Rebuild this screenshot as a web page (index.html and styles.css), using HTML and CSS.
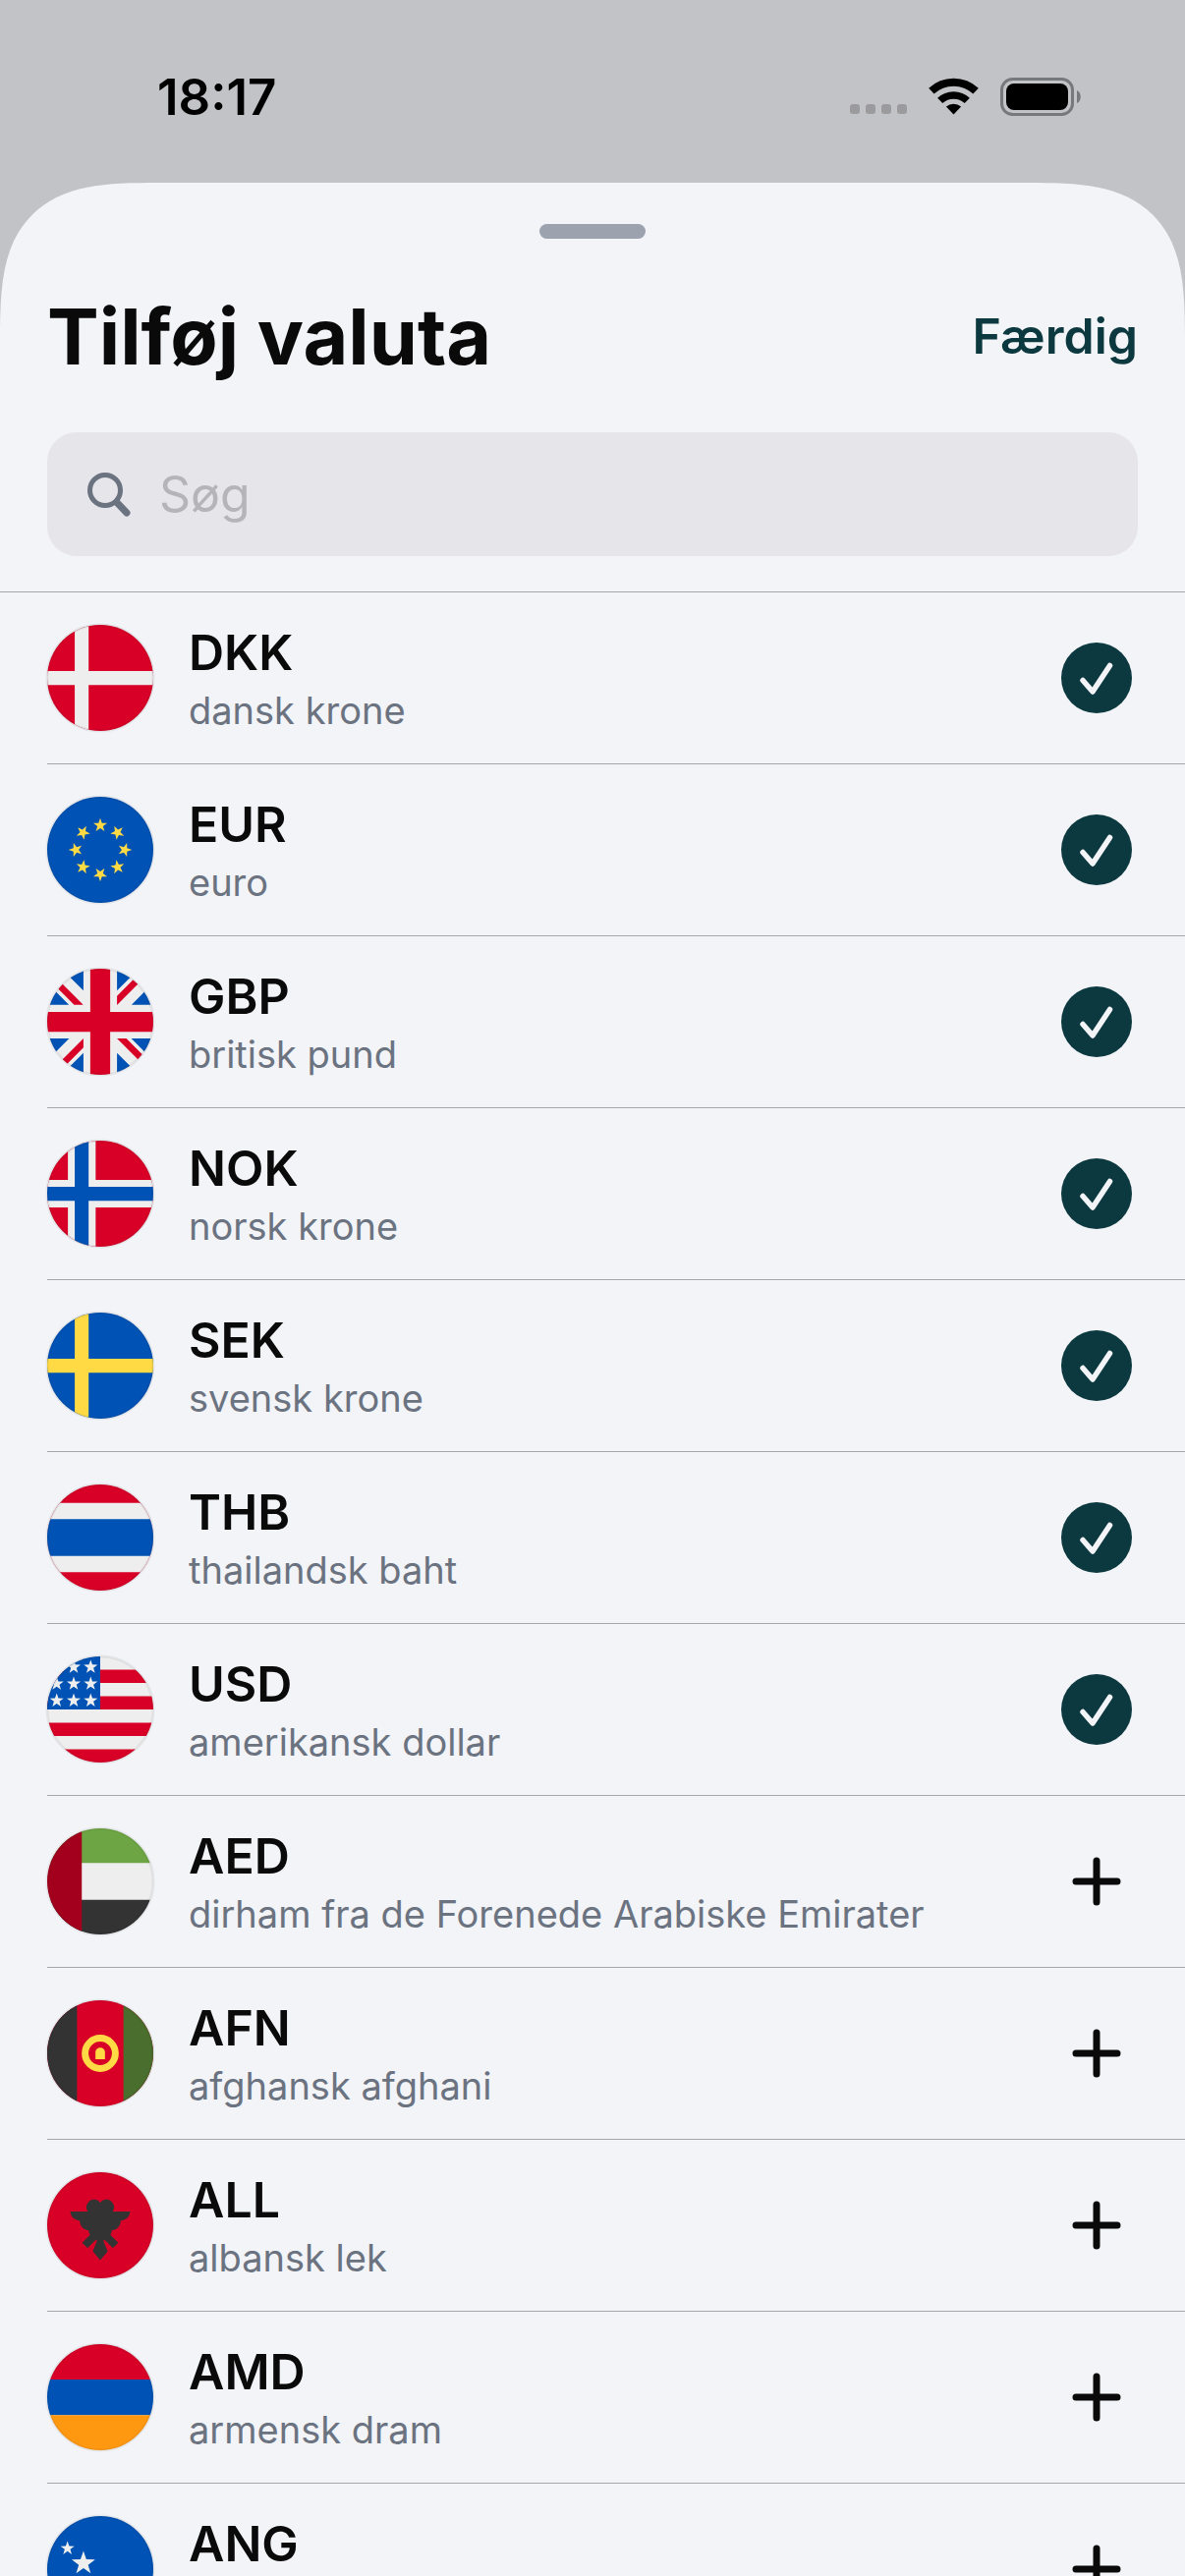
FILE: index.html
```html
<!DOCTYPE html>
<html lang="da">
<head>
    <meta charset="UTF-8">
    <meta name="viewport" content="width=device-width, initial-scale=1.0">
    <title>Tilføj valuta</title>
    <link rel="stylesheet" href="styles.css">
</head>
<body>
    <!-- Shared shapes -->
    <svg class="defs" width="0" height="0" aria-hidden="true">
        <defs>
            <clipPath id="round"><circle cx="256" cy="256" r="256"/></clipPath>
            <path id="star" d="M0-35 8.2-11.3 33.3-10.8 13.3 4.3 20.6 28.3 0 14-20.6 28.3-13.3 4.3-33.3-10.8-8.2-11.3z"/>
            <symbol id="check" viewBox="0 0 72 72">
                <circle cx="36" cy="36" r="36" fill="#0c393f"/>
                <path d="M22 38.500 32 50 49.500 23.500" fill="none" stroke="#f2f4f8" stroke-width="5.500" stroke-linecap="round" stroke-linejoin="round"/>
            </symbol>
            <symbol id="plus" viewBox="0 0 72 72">
                <path d="M36 15v42M15 36h42" fill="none" stroke="#0a0a0a" stroke-width="7" stroke-linecap="round"/>
            </symbol>
        </defs>
    </svg>

    <div class="status-bar">
        <span class="time">18:17</span>
        <div class="status-icons">
            <svg width="58" height="38" viewBox="0 0 58 38" fill="#9b9b9e">
                <rect x="0" y="27" width="10" height="10" rx="3"/>
                <rect x="16" y="27" width="10" height="10" rx="3"/>
                <rect x="32" y="27" width="10" height="10" rx="3"/>
                <rect x="48" y="27" width="10" height="10" rx="3"/>
            </svg>
            <svg width="51" height="38" viewBox="0 0 51 38">
                <path d="M2.900 13.700A33 33 0 0 1 48.100 13.700" fill="none" stroke="#000" stroke-width="8"/>
                <path d="M11.700 23.400A20 20 0 0 1 39.300 23.400" fill="none" stroke="#000" stroke-width="7.500"/>
                <path d="M25.500 37.500 17.900 29.500A12 12 0 0 1 33.100 29.500z"/>
            </svg>
            <svg width="82" height="39" viewBox="0 0 82 39">
                <rect x="1.500" y="1.500" width="72" height="36" rx="11" fill="none" stroke="#77787b" stroke-width="3"/>
                <rect x="6" y="6" width="63" height="27" rx="8"/>
                <path d="M78 13c5 2 5 11 0 13z" fill="#77787b"/>
            </svg>
        </div>
    </div>

    <main class="sheet">
        <div class="grabber"></div>

        <header class="sheet-header">
            <h1>Tilføj valuta</h1>
            <button class="done">Færdig</button>
        </header>

        <label class="search">
            <svg width="54" height="54" viewBox="0 0 54 54" fill="none" stroke="#6b7280" stroke-linecap="round" aria-hidden="true">
                <circle cx="23" cy="23" r="15.500" stroke-width="5"/>
                <path d="M35 35.500 45 46" stroke-width="7"/>
            </svg>
            <input type="text" placeholder="Søg" aria-label="Søg">
        </label>

        <ul class="currencies">
            <li>
                <svg class="flag" viewBox="0 0 512 512">
                    <g clip-path="url(#round)">
                        <path fill="#d80027" d="M0 0h512v512H0z"/>
                        <path fill="#eee" d="M133 0h67v223h312v67H200v222h-67V290H0v-67h133z"/>
                    </g>
                    <circle class="ring" cx="256" cy="256" r="256"/>
                </svg>
                <div class="label">
                    <span class="code">DKK</span>
                    <span class="name">dansk krone</span>
                </div>
                <button class="toggle" aria-pressed="true" aria-label="Fjern DKK"><svg><use href="#check"/></svg></button>
            </li>
            <li>
                <svg class="flag" viewBox="0 0 512 512">
                    <g clip-path="url(#round)">
                        <path fill="#0052b4" d="M0 0h512v512H0z"/>
                        <g fill="#ffda44" transform="translate(256 256)">
                            <use href="#star" transform="translate(0 -118)"/>
                            <use href="#star" transform="rotate(45) translate(0 -118)"/>
                            <use href="#star" transform="rotate(90) translate(0 -118)"/>
                            <use href="#star" transform="rotate(135) translate(0 -118)"/>
                            <use href="#star" transform="rotate(180) translate(0 -118)"/>
                            <use href="#star" transform="rotate(225) translate(0 -118)"/>
                            <use href="#star" transform="rotate(270) translate(0 -118)"/>
                            <use href="#star" transform="rotate(315) translate(0 -118)"/>
                        </g>
                    </g>
                    <circle class="ring" cx="256" cy="256" r="256"/>
                </svg>
                <div class="label">
                    <span class="code">EUR</span>
                    <span class="name">euro</span>
                </div>
                <button class="toggle" aria-pressed="true" aria-label="Fjern EUR"><svg><use href="#check"/></svg></button>
            </li>
            <li>
                <svg class="flag" viewBox="0 0 512 512">
                    <g clip-path="url(#round)">
                        <path fill="#eee" d="M0 0h512v512H0z"/>
                        <path fill="#0052b4" d="M175 0v106L69 0zM337 0v106L443 0zM0 69v105h105zM512 69v105H407zM0 443v-106h106zM512 443v-106H406zM175 512V406L69 512zM337 512V406l106 106z"/>
                        <path fill="#d80027" d="M0 0v44l130 130h44zM468 0h44L337 175v-44zM337 337h45l130 130v45zM175 337v44L44 512H0z"/>
                        <path fill="#d80027" d="M208 0h96v208h208v96H304v208h-96V304H0v-96h208z"/>
                    </g>
                    <circle class="ring" cx="256" cy="256" r="256"/>
                </svg>
                <div class="label">
                    <span class="code">GBP</span>
                    <span class="name">britisk pund</span>
                </div>
                <button class="toggle" aria-pressed="true" aria-label="Fjern GBP"><svg><use href="#check"/></svg></button>
            </li>
            <li>
                <svg class="flag" viewBox="0 0 512 512">
                    <g clip-path="url(#round)">
                        <path fill="#d80027" d="M0 0h512v512H0z"/>
                        <path fill="#eee" d="M100 0h134v190h278v132H234v190H100V322H0V190h100z"/>
                        <path fill="#0052b4" d="M133 0h67v223h312v67H200v222h-67V290H0v-67h133z"/>
                    </g>
                    <circle class="ring" cx="256" cy="256" r="256"/>
                </svg>
                <div class="label">
                    <span class="code">NOK</span>
                    <span class="name">norsk krone</span>
                </div>
                <button class="toggle" aria-pressed="true" aria-label="Fjern NOK"><svg><use href="#check"/></svg></button>
            </li>
            <li>
                <svg class="flag" viewBox="0 0 512 512">
                    <g clip-path="url(#round)">
                        <path fill="#0052b4" d="M0 0h512v512H0z"/>
                        <path fill="#ffda44" d="M133 0h67v223h312v67H200v222h-67V290H0v-67h133z"/>
                    </g>
                    <circle class="ring" cx="256" cy="256" r="256"/>
                </svg>
                <div class="label">
                    <span class="code">SEK</span>
                    <span class="name">svensk krone</span>
                </div>
                <button class="toggle" aria-pressed="true" aria-label="Fjern SEK"><svg><use href="#check"/></svg></button>
            </li>
            <li>
                <svg class="flag" viewBox="0 0 512 512">
                    <g clip-path="url(#round)">
                        <path fill="#d80027" d="M0 0h512v512H0z"/>
                        <path fill="#eee" d="M0 89h512v334H0z"/>
                        <path fill="#0052b4" d="M0 167h512v178H0z"/>
                    </g>
                    <circle class="ring" cx="256" cy="256" r="256"/>
                </svg>
                <div class="label">
                    <span class="code">THB</span>
                    <span class="name">thailandsk baht</span>
                </div>
                <button class="toggle" aria-pressed="true" aria-label="Fjern THB"><svg><use href="#check"/></svg></button>
            </li>
            <li>
                <svg class="flag" viewBox="0 0 512 512">
                    <g clip-path="url(#round)">
                        <path fill="#eee" d="M0 0h512v512H0z"/>
                        <path fill="#d80027" d="M0 64h512v64H0zM0 192h512v64H0zM0 320h512v64H0zM0 448h512v64H0z"/>
                        <path fill="#0052b4" d="M0 0h256v256H0z"/>
                        <g fill="#eee">
                            <use href="#star" x="46" y="51"/>
                            <use href="#star" x="128" y="51"/>
                            <use href="#star" x="210" y="51"/>
                            <use href="#star" x="46" y="132"/>
                            <use href="#star" x="128" y="132"/>
                            <use href="#star" x="210" y="132"/>
                            <use href="#star" x="46" y="213"/>
                            <use href="#star" x="128" y="213"/>
                            <use href="#star" x="210" y="213"/>
                        </g>
                    </g>
                    <circle class="ring" cx="256" cy="256" r="256"/>
                </svg>
                <div class="label">
                    <span class="code">USD</span>
                    <span class="name">amerikansk dollar</span>
                </div>
                <button class="toggle" aria-pressed="true" aria-label="Fjern USD"><svg><use href="#check"/></svg></button>
            </li>
            <li>
                <svg class="flag" viewBox="0 0 512 512">
                    <g clip-path="url(#round)">
                        <path fill="#eee" d="M0 0h512v512H0z"/>
                        <path fill="#6da544" d="M0 0h512v167H0z"/>
                        <path fill="#333" d="M0 345h512v167H0z"/>
                        <path fill="#a2001d" d="M0 0h167v512H0z"/>
                    </g>
                    <circle class="ring" cx="256" cy="256" r="256"/>
                </svg>
                <div class="label">
                    <span class="code">AED</span>
                    <span class="name">dirham fra de Forenede Arabiske Emirater</span>
                </div>
                <button class="toggle" aria-pressed="false" aria-label="Tilføj AED"><svg><use href="#plus"/></svg></button>
            </li>
            <li>
                <svg class="flag" viewBox="0 0 512 512">
                    <g clip-path="url(#round)">
                        <path fill="#d80027" d="M0 0h512v512H0z"/>
                        <path fill="#333" d="M0 0h144v512H0z"/>
                        <path fill="#496e2d" d="M368 0h144v512H368z"/>
                        <circle cx="256" cy="256" r="73" fill="none" stroke="#ffda44" stroke-width="33"/>
                        <path fill="#ffda44" d="M233 285v-34c0-30 46-30 46 0v34z"/>
                    </g>
                    <circle class="ring" cx="256" cy="256" r="256"/>
                </svg>
                <div class="label">
                    <span class="code">AFN</span>
                    <span class="name">afghansk afghani</span>
                </div>
                <button class="toggle" aria-pressed="false" aria-label="Tilføj AFN"><svg><use href="#plus"/></svg></button>
            </li>
            <li>
                <svg class="flag" viewBox="0 0 512 512">
                    <g clip-path="url(#round)">
                        <path fill="#d80027" d="M0 0h512v512H0z"/>
                        <path fill="#333" d="M400 190h-84a33 33 0 0 0-60-43 33 33 0 0 0-60 43h-84c0 24 20 43 45 43 0 25 20 47 43 47 0 8 2 15 7 22l-38 38 26 26 39-39 7 3-21 52 36 42 36-42-21-52 7-3 39 39 26-26-38-38c5-7 7-14 7-22 23 0 43-22 43-47 25 0 45-19 45-43z"/>
                    </g>
                    <circle class="ring" cx="256" cy="256" r="256"/>
                </svg>
                <div class="label">
                    <span class="code">ALL</span>
                    <span class="name">albansk lek</span>
                </div>
                <button class="toggle" aria-pressed="false" aria-label="Tilføj ALL"><svg><use href="#plus"/></svg></button>
            </li>
            <li>
                <svg class="flag" viewBox="0 0 512 512">
                    <g clip-path="url(#round)">
                        <path fill="#d80027" d="M0 0h512v171H0z"/>
                        <path fill="#0052b4" d="M0 171h512v171H0z"/>
                        <path fill="#ff9811" d="M0 342h512v170H0z"/>
                    </g>
                    <circle class="ring" cx="256" cy="256" r="256"/>
                </svg>
                <div class="label">
                    <span class="code">AMD</span>
                    <span class="name">armensk dram</span>
                </div>
                <button class="toggle" aria-pressed="false" aria-label="Tilføj AMD"><svg><use href="#plus"/></svg></button>
            </li>
            <li>
                <svg class="flag" viewBox="0 0 512 512">
                    <g clip-path="url(#round)">
                        <path fill="#0052b4" d="M0 0h512v512H0z"/>
                        <path fill="#ffda44" d="M0 322h512v67H0z"/>
                        <use href="#star" fill="#eee" x="98" y="156"/>
                        <use href="#star" fill="#eee" transform="translate(175 228) scale(1.7)"/>
                    </g>
                    <circle class="ring" cx="256" cy="256" r="256"/>
                </svg>
                <div class="label">
                    <span class="code">ANG</span>
                    <span class="name"></span>
                </div>
                <button class="toggle" aria-pressed="false" aria-label="Tilføj ANG"><svg><use href="#plus"/></svg></button>
            </li>
        </ul>
    </main>
</body>
</html>
```
FILE: styles.css
```css
* {
    box-sizing: border-box;
}

body {
    margin: 0;
    height: 100vh;
    display: flex;
    flex-direction: column;
    overflow: hidden;
    background-color: #c2c3c7;
    color: #0a0a0a;
    font-family: Inter, "Liberation Sans", sans-serif;
}

svg {
    display: block;
    flex-shrink: 0;
}

.defs {
    position: absolute;
}

button {
    padding: 0;
    border: none;
    background: none;
    font-family: inherit;
    cursor: pointer;
}

/* Status bar */
.status-bar {
    display: flex;
    justify-content: space-between;
    align-items: center;
    flex-shrink: 0;
    height: 186px;
    padding: 10px 106px 0 160px;
    color: #000;
}

.time {
    font-size: 51px;
    font-weight: 600;
}

.status-icons {
    display: flex;
    align-items: center;
    gap: 22px;
}

/* Sheet */
.sheet {
    flex: 1;
    min-height: 0;
    display: flex;
    flex-direction: column;
    padding-top: 42px;
    background-color: #f2f4f8;
    border-radius: 114px 114px 0 0;
}

@supports (corner-shape: superellipse(1.6)) {
    .sheet {
        border-radius: 160px 160px 0 0;
        corner-shape: superellipse(1.6);
    }
}

.grabber {
    flex-shrink: 0;
    align-self: center;
    width: 108px;
    height: 15px;
    border-radius: 8px;
    background-color: #9ca3af;
}

.sheet-header {
    display: flex;
    justify-content: space-between;
    align-items: center;
    padding: 49px 48px 0;
}

h1 {
    margin: 0;
    font-size: 79px;
    line-height: 100px;
    font-weight: 700;
}

.done {
    color: #0c393f;
    font-size: 50px;
    font-weight: 600;
}

.search {
    display: flex;
    align-items: center;
    flex-shrink: 0;
    gap: 24px;
    height: 126px;
    margin: 48px 48px 36px;
    padding: 0 36px;
    border-radius: 30px;
    background-color: #e5e5ea;
}

.search input {
    flex: 1;
    min-width: 0;
    padding: 0;
    border: none;
    outline: none;
    background: none;
    color: #0a0a0a;
    font-family: inherit;
    font-size: 50px;
}

.search input::placeholder {
    color: #b4b4b9;
    opacity: 1;
}

/* Currency list */
.currencies {
    flex: 1;
    min-height: 0;
    margin: 0;
    padding: 0;
    list-style: none;
    overflow-y: auto;
    scrollbar-width: none;
    border-top: 1px solid #a3a6ac;
}

.currencies li {
    display: flex;
    align-items: center;
    gap: 36px;
    height: 175px;
    margin-left: 48px;
    padding-right: 54px;
    border-bottom: 1px solid #a3a6ac;
}

.flag {
    width: 108px;
    height: 108px;
    overflow: visible;
}

.ring {
    fill: none;
    stroke: rgba(0, 0, 0, 0.06);
    stroke-width: 14px;
}

.label {
    flex: 1;
    display: flex;
    flex-direction: column;
    gap: 8px;
}

.code {
    font-size: 50px;
    line-height: 58px;
    font-weight: 600;
}

.name {
    min-height: 44px;
    color: #6b7280;
    font-size: 38px;
    line-height: 44px;
}

.toggle svg {
    width: 72px;
    height: 72px;
}
```
